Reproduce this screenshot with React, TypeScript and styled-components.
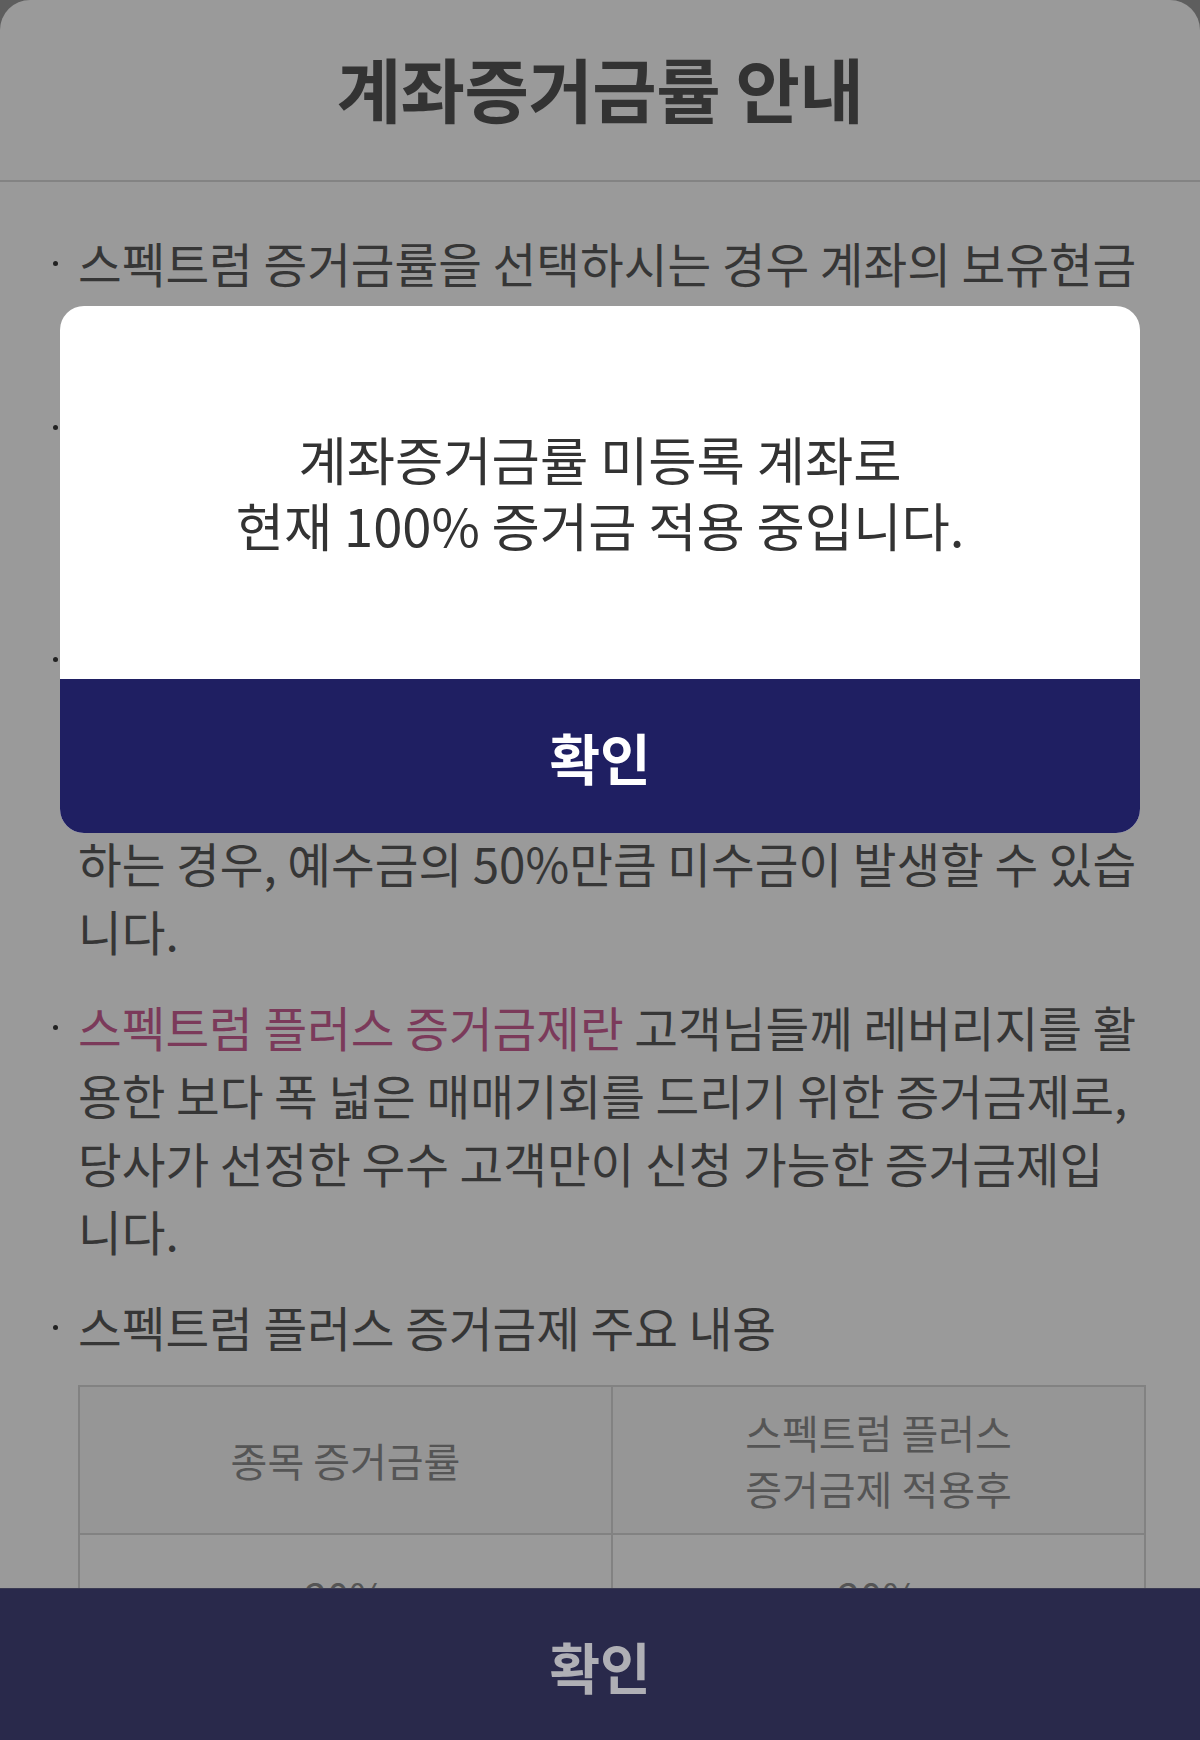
import styled, { createGlobalStyle } from "styled-components";

const GlobalStyle = createGlobalStyle`
  html, body {
    margin: 0;
    padding: 0;
    overflow: hidden;
    background: #5e5e5e;
    font-family: "Noto Sans CJK KR", "Noto Sans", sans-serif;
  }
`;

const Sheet = styled.div`
  height: 100vh;
  background: #9a9a9a;
  border-radius: 30px 30px 0 0;
  overflow: hidden;
  display: flex;
  flex-direction: column;
`;

const Header = styled.header`
  height: 180px;
  flex-shrink: 0;
  display: flex;
  align-items: center;
  justify-content: center;
  border-bottom: 2px solid #838383;
`;

const Title = styled.h1`
  margin: 0 0 6px;
  font-size: 70px;
  font-weight: 700;
  color: #333;
  letter-spacing: -0.5px;
`;

const Content = styled.div`
  padding: 47px 54px 0 53px;
`;

const Item = styled.div<{ $gap?: number }>`
  display: flex;
  margin-bottom: ${(p) => p.$gap ?? 28}px;
`;

const BulletBox = styled.span`
  width: 25px;
  height: 68px;
  flex-shrink: 0;
  display: flex;
  align-items: center;
`;

const Dot = styled.span`
  width: 5px;
  height: 5px;
  border-radius: 50%;
  background: #222;
`;

const Text = styled.div`
  flex: 1;
  font-size: 47.5px;
  line-height: 68px;
  color: #363636;
  white-space: nowrap;
`;

const Accent = styled.span`
  color: #7b3a5a;
`;

const Table = styled.table`
  margin-top: 24px;
  width: 100%;
  border-collapse: collapse;
  table-layout: fixed;
  font-size: 40px;
  line-height: 56px;
  color: #555;
`;

const Th = styled.th`
  font-weight: 400;
  padding: 17px 0;
  background: #969696;
  border: 2px solid #828282;
`;

const Td = styled.td`
  text-align: center;
  padding: 33px 0;
  border: 2px solid #828282;
`;

const Footer = styled.button`
  position: fixed;
  left: 0;
  right: 0;
  bottom: 0;
  height: 152px;
  border: 0;
  border-top: 1px solid #3a3a52;
  background: #29294b;
  color: #afafb5;
  font-family: inherit;
  font-size: 55px;
  font-weight: 700;
`;

const Backdrop = styled.div`
  position: fixed;
  inset: 0;
  display: flex;
  justify-content: center;
  align-items: flex-start;
  padding-top: 306px;
`;

const Modal = styled.div`
  width: 1080px;
  border-radius: 24px;
  overflow: hidden;
  background: #fff;
  display: flex;
  flex-direction: column;
`;

const ModalBody = styled.div`
  height: 373px;
  box-sizing: border-box;
  padding-bottom: 4px;
  display: flex;
  align-items: center;
  justify-content: center;
  text-align: center;
  font-size: 52.5px;
  line-height: 66px;
  color: #333;
`;

const ModalButton = styled.button`
  height: 154px;
  border: 0;
  background: #1f1f62;
  color: #fff;
  font-family: inherit;
  font-size: 55px;
  font-weight: 700;
`;

function Bullet() {
  return (
    <BulletBox>
      <Dot />
    </BulletBox>
  );
}

export default function App() {
  return (
    <>
      <GlobalStyle />
      <Sheet>
        <Header>
          <Title>계좌증거금률 안내</Title>
        </Header>
        <Content>
          <Item>
            <Bullet />
            <Text>
              스펙트럼 증거금률을 선택하시는 경우 계좌의 보유현금
              <br />및 대용금 범위 내에서 주문이 가능합니다.
            </Text>
          </Item>
          <Item>
            <Bullet />
            <Text>
              증거금률 100% 종목은 스펙트럼 증거금률을 적
              <br />
              용하여도 100% 증거금이 적용되며, 매수 시 현금
              <br />
              및 대용금 범위 내에서 주문이 가능합니다.
            </Text>
          </Item>
          <Item>
            <Bullet />
            <Text>
              스펙트럼 증거금률 적용 계좌에서 대용금으로 매수
              <br />
              주문 시 현금 미수가 발생할 수 있으며, 예수금을
              <br />
              전액 매수에 사용한 뒤 결제일 이전에 출금 또는 매도
              <br />
              하는 경우, 예수금의 50%만큼 미수금이 발생할 수 있습
              <br />
              니다.
            </Text>
          </Item>
          <Item>
            <Bullet />
            <Text>
              <Accent>스펙트럼 플러스 증거금제란</Accent> 고객님들께 레버리지를 활
              <br />
              용한 보다 폭 넓은 매매기회를 드리기 위한 증거금제로,
              <br />
              당사가 선정한 우수 고객만이 신청 가능한 증거금제입
              <br />
              니다.
            </Text>
          </Item>
          <Item $gap={0}>
            <Bullet />
            <Text>
              스펙트럼 플러스 증거금제 주요 내용
              <Table>
                <thead>
                  <tr>
                    <Th>종목 증거금률</Th>
                    <Th>
                      스펙트럼 플러스
                      <br />
                      증거금제 적용후
                    </Th>
                  </tr>
                </thead>
                <tbody>
                  <tr>
                    <Td>20%</Td>
                    <Td>20%</Td>
                  </tr>
                  <tr>
                    <Td>30%</Td>
                    <Td>20%</Td>
                  </tr>
                </tbody>
              </Table>
            </Text>
          </Item>
        </Content>
        <Footer>확인</Footer>
      </Sheet>
      <Backdrop>
        <Modal>
          <ModalBody>
            <div>
              계좌증거금률 미등록 계좌로
              <br />
              현재 100% 증거금 적용 중입니다.
            </div>
          </ModalBody>
          <ModalButton>확인</ModalButton>
        </Modal>
      </Backdrop>
    </>
  );
}
